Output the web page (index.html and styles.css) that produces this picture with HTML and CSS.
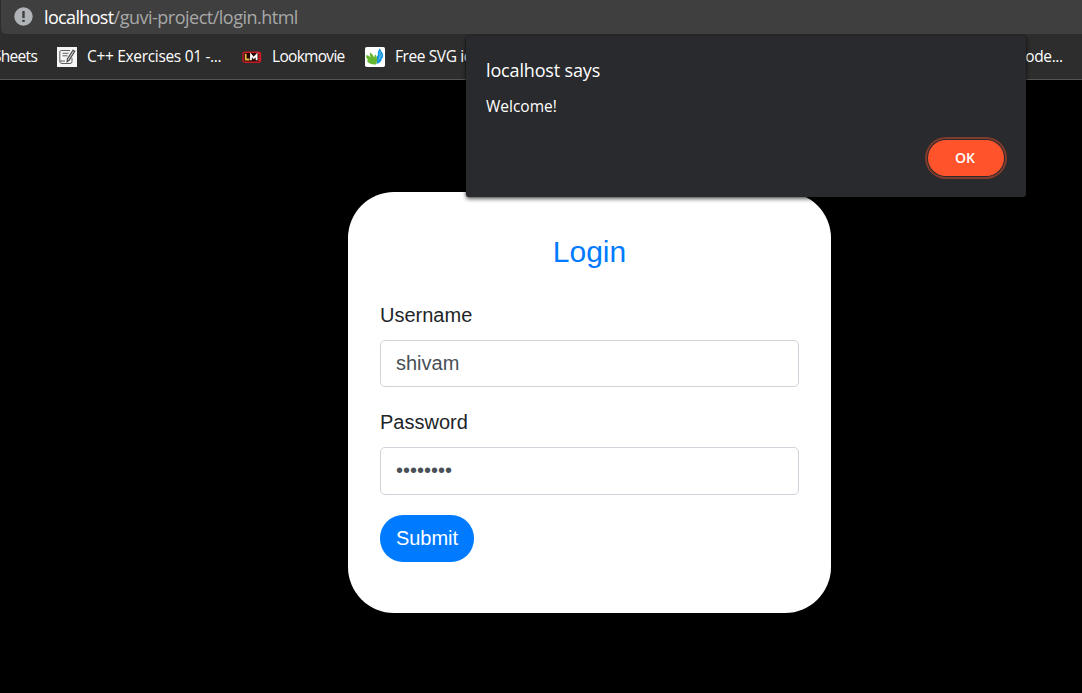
FILE: index.html
```html
<!DOCTYPE html>
<html lang="en">
<head>
<meta charset="utf-8">
<title>Login</title>
<link rel="stylesheet" href="styles.css">
</head>
<body>
<header class="toolbar">
  <div class="address">
    <svg class="info" width="19" height="19" viewBox="0 0 19 19"><circle cx="9.5" cy="9.5" r="9.2" fill="#b0b3b8"/><path d="M8.3 4h2.4v7H8.3zM8.3 12.7h2.4v2.3H8.3z" fill="#3f3f3f"/></svg>
    <span class="host">localhost</span><span class="path">/guvi-project/login.html</span>
  </div>
  <nav class="bookmarks">
    <span class="bm sheets">Sheets</span>
    <svg class="ico note" width="20" height="20" viewBox="0 0 20 20"><path fill="#f5f5f5" d="M0 0h20v20H0z"/><path d="M13 3.5H4.2Q2.8 3.5 2.8 5v9Q2.8 16.5 5 16.5h8q2 0 2-2V11M5.5 6.3h6M5.5 8.8h5M3 14h5" fill="none" stroke="#606060"/><path d="M16 3.3l1.8 1-5.5 8.8-2.2 1.6.3-2.7z" fill="#ccc" stroke="#444" stroke-width="1.1"/></svg>
    <span class="bm cpp">C++ Exercises 01 -...</span>
    <svg class="ico movie" width="20" height="20" viewBox="0 0 20 20"><rect x="1" y="5.2" width="17.5" height="10" rx="2" fill="#240808" stroke="#c81c24" stroke-width="1.4"/><path d="M17.4 6v8.500" stroke="#e02028" stroke-width="2.6" stroke-dasharray="1.5 .7"/><path d="M3.7 6.800v5.700h3.800" fill="none" stroke="#e8b63c" stroke-width="1.8"/><path d="M9 13.200V7.800l2.800 3.200 2.800-3.200v5.400" fill="none" stroke="#fff" stroke-width="1.800"/></svg>
    <span class="bm look">Lookmovie</span>
    <svg class="ico free" width="20" height="20" viewBox="0 0 20 20"><rect width="20" height="20" rx="1.8" fill="#fff"/><path d="M14.500 1.500c2 1 1 2.500 2.500 3.500.5 1.500 1.500 1.500 1 3 .5 1.500 0 2.500-1 3.500-.5 3-2.500 5-5.500 5.500 1-3-.3-4.500.5-7.500l1-2c-.8-2 .5-4 1.500-6z" fill="#1595df"/><path d="M15 4v8M17 7l-3.500 6" stroke="#69c8f4" stroke-width=".7"/><path d="M1 8.500c1.500-.5 3 .5 4.500 2C5 8.500 4.700 7 5.200 5.500c2 1 3 3.500 4 5.200.2-1.400.5-2.500 1.300-3.200 2 3 2.200 6 .5 10C7 18 3.500 16.500 1.500 13.500c1 0 1.500 0 2-.2C2 12 1.200 10.500 1 8.500z" fill="#65b82e"/></svg>
    <span class="bm svg">Free SVG icons</span>
    <span class="bm code">Code...</span>
  </nav>
</header>
<main class="page">
  <form class="card">
    <h1 class="title">Login</h1>
    <label class="label" for="user">Username</label>
    <input class="field" id="user" type="text" value="shivam">
    <label class="label" for="pass">Password</label>
    <input class="field secret" id="pass" type="password" value="password">
    <button class="submit" type="button">Submit</button>
  </form>
</main>
<section class="dialog" role="alertdialog">
  <h2 class="says">localhost says</h2>
  <p class="message">Welcome!</p>
  <button class="ok" type="button">OK</button>
</section>
</body>
</html>
```
FILE: styles.css
```css
* { box-sizing: border-box; }
body {
  margin: 0;
  width: 1082px;
  height: 693px;
  overflow: hidden;
  background: #000;
  font-family: "Open Sans", "Noto Sans", sans-serif;
}
.toolbar { height: 80px; background: #2d2d2d; border-bottom: 1px solid #555; }
.address {
  height: 34px;
  margin-left: 1px;
  padding: 0 0 1px 13px;
  display: flex;
  align-items: center;
  background: #3f3f3f;
  border-bottom-left-radius: 5px;
  font-size: 18px;
  white-space: nowrap;
}
.info { margin-right: 11px; flex: none; }
.host { color: #fff; letter-spacing: -0.65px; }
.path { color: #a8a8a8; letter-spacing: -0.5px; }
.bookmarks {
  height: 45px;
  padding-bottom: 1px;
  display: flex;
  align-items: center;
  color: #fff;
  font-size: 15.5px;
  white-space: nowrap;
  overflow: hidden;
}
.bm { flex: none; letter-spacing: -0.4px; }
.ico { flex: none; margin: 1px 10px 0 0; }
.sheets { width: 64px; margin-left: -7px; letter-spacing: -0.7px; }
.cpp { width: 155px; letter-spacing: -0.32px; }
.look { width: 93px; letter-spacing: -0.7px; }
.svg { width: 621px; }
.page { display: flex; padding: 112px 0 0 348px; }
.card {
  width: 483px;
  height: 421px;
  padding: 42px 32px 0;
  display: flex;
  flex-direction: column;
  background: #fff;
  border-radius: 46px;
  font-family: "Liberation Sans", Arial, sans-serif;
  font-size: 20px;
}
.title { margin: 0 0 30px; font-size: 30px; line-height: 36px; font-weight: 400; text-align: center; color: #007bff; }
.label { line-height: 30px; margin-bottom: 10px; color: #212529; }
.field {
  height: 47px;
  margin: 0 0 20px;
  padding: 0 15px;
  border: 1px solid #ced4da;
  border-radius: 5px;
  color: #495057;
  background: #fff;
  font: inherit;
  outline: none;
}
.secret { height: 48px; padding-bottom: 2px; }
.submit {
  width: 94px;
  height: 47px;
  padding: 0;
  border: 0;
  border-radius: 23px;
  background: #007bff;
  color: #fff;
  font: inherit;
}
.dialog {
  position: absolute;
  left: 466px;
  top: 36px;
  width: 560px;
  height: 161px;
  padding: 21px 22px 0 20px;
  display: flex;
  flex-direction: column;
  background: #292a2d;
  border-radius: 3px;
  box-shadow: 0 2px 4px rgba(0, 0, 0, 0.6), 0 0 2px rgba(0, 0, 0, 0.5);
  color: #fff;
}
.says { margin: 0; font-size: 18px; line-height: 26px; font-weight: 400; letter-spacing: -0.15px; }
.message { margin: 12px 0 23px; font-size: 15.5px; line-height: 22px; }
.ok {
  align-self: flex-end;
  width: 76px;
  height: 36px;
  padding: 0 2px 1px 0;
  border: 0;
  border-radius: 18px;
  background: #ff542b;
  box-shadow: 0 0 0 1px #292a2d, 0 0 0 3px #813b2d;
  color: #fff;
  font: 600 14px "Open Sans", sans-serif;
}
```
